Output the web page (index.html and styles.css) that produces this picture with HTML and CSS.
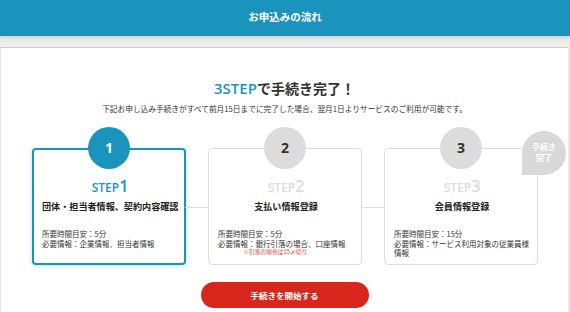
FILE: index.html
```html
<!DOCTYPE html>
<html lang="ja">
<head>
    <meta charset="UTF-8">
    <meta name="viewport" content="width=device-width, initial-scale=1.0">
    <title>お申込みの流れ</title>
    <link rel="stylesheet" href="styles.css">
</head>
<body>
    <header class="header">
        <h1>お申込みの流れ</h1>
    </header>
    <div class="wrap">
        <div class="panel">
            <h2 class="lead"><span class="lead-num">3STEP</span>で手続き完了！</h2>
            <p class="sub">下記お申し込み手続きがすべて前月15日までに完了した場合、翌月1日よりサービスのご利用が可能です。</p>

            <div class="steps">
                <div class="step active">
                    <div class="num">1</div>
                    <div class="card">
                        <div class="step-label">STEP<span>1</span></div>
                        <div class="step-title">団体・担当者情報、契約内容確認</div>
                        <div class="detail">
                            所要時間目安：5分<br>
                            必要情報：企業情報、担当者情報
                        </div>
                    </div>
                </div>
                <div class="step">
                    <div class="num">2</div>
                    <div class="card">
                        <div class="step-label">STEP<span>2</span></div>
                        <div class="step-title">支払い情報登録</div>
                        <div class="detail">
                            所要時間目安：5分<br>
                            必要情報：銀行引落の場合、口座情報
                            <div class="note">※引落の場合は15〆切り</div>
                        </div>
                    </div>
                </div>
                <div class="step">
                    <div class="num">3</div>
                    <div class="card">
                        <div class="badge">手続き<br>完了</div>
                        <div class="step-label">STEP<span>3</span></div>
                        <div class="step-title">会員情報登録</div>
                        <div class="detail">
                            所要時間目安：15分<br>
                            必要情報：サービス利用対象の従業員様情報
                        </div>
                    </div>
                </div>
            </div>

            <div class="actions">
                <button type="button" class="start-btn">手続きを開始する</button>
            </div>
        </div>
    </div>
</body>
</html>
```

FILE: styles.css
```css
body {
    margin: 0;
    padding: 0;
    font-family: "Noto Sans CJK JP", "Noto Sans", sans-serif;
    color: #333;
    background-color: #efefef;
    overflow: hidden;
}
.header {
    background-color: #1a94bd;
    height: 36px;
    box-shadow: 0 1px 4px rgba(0,0,0,0.12);
    position: relative;
}
.header h1 {
    margin: 0;
    color: #fff;
    font-size: 10.5px;
    font-weight: bold;
    line-height: 34px;
    text-align: center;
}
.wrap {
    padding-top: 11px;
    background: linear-gradient(#e7e7e7, #f0f0f0 11px);
}
.panel {
    background-color: #fff;
    border: 1px solid #e4e4e4;
    border-top: 1px solid #e9bfb8;
    border-bottom: none;
    margin-right: 1px;
    padding-top: 30px;
    height: 265px;
    box-sizing: border-box;
}
.lead {
    margin: 0;
    font-size: 14px;
    line-height: 20px;
    text-align: center;
    font-weight: bold;
    color: #333;
}
.lead-num {
    font-family: "Open Sans", sans-serif;
    font-weight: 600;
    font-size: 15px;
    color: #1a94bd;
}
.sub {
    margin: 5px 0 0;
    font-size: 7.7px;
    line-height: 12px;
    text-align: center;
    color: #333;
}
.steps {
    display: flex;
    justify-content: center;
    gap: 22px;
    margin-top: 12px;
    padding-left: 1px;
}
.step {
    width: 154px;
    display: flex;
    flex-direction: column;
    align-items: center;
}
.num {
    width: 42px;
    height: 42px;
    border-radius: 50%;
    background-color: #dcdcdc;
    color: #333;
    font-family: "Open Sans", sans-serif;
    font-weight: bold;
    font-size: 14px;
    line-height: 42px;
    text-align: center;
    margin-bottom: -21px;
    position: relative;
    z-index: 1;
}
.step.active .num {
    background-color: #1a94bd;
    color: #fff;
}
.card {
    position: relative;
    box-sizing: border-box;
    width: 100%;
    height: 117px;
    border: 1px solid #dedede;
    border-radius: 4px;
    padding: 28px 7px 0 9px;
    background-color: #fff;
}
.step.active .card {
    border: 2px solid #1a94bd;
    padding: 27px 6px 0 8px;
    box-shadow: 0 1px 4px rgba(26,148,189,0.3);
}
.step + .step .card::before {
    content: "";
    position: absolute;
    left: -24px;
    top: 58px;
    width: 23px;
    height: 1px;
    background-color: #dedede;
}
.step-label {
    font-family: "Open Sans", sans-serif;
    font-weight: 600;
    font-size: 12px;
    line-height: 18px;
    text-align: center;
    color: #dcdcdc;
}
.step-label span {
    font-size: 16px;
}
.step.active .step-label {
    color: #1a94bd;
}
.step-title {
    font-size: 9.1px;
    font-weight: bold;
    line-height: 18px;
    text-align: center;
    color: #222;
    white-space: nowrap;
}
.detail {
    margin-top: 14px;
    font-size: 7.5px;
    line-height: 9.5px;
    color: #333;
}
.note {
    color: #e03a2f;
    font-size: 5.8px;
    line-height: 8px;
    padding-left: 25px;
}
.badge {
    position: absolute;
    left: 137px;
    top: -18px;
    width: 44px;
    height: 44px;
    border-radius: 50% 50% 50% 0;
    background-color: #d9d9d9;
    color: #fff;
    font-size: 8px;
    font-weight: bold;
    line-height: 10.5px;
    text-align: center;
    box-sizing: border-box;
    padding-top: 11px;
}
.actions {
    display: flex;
    justify-content: center;
    margin-top: 17px;
}
.start-btn {
    width: 168px;
    height: 26px;
    border: none;
    border-radius: 13px;
    background-color: #d9261c;
    color: #fff;
    font-family: "Noto Sans CJK JP", sans-serif;
    font-size: 8.5px;
    font-weight: bold;
    cursor: pointer;
}
```
